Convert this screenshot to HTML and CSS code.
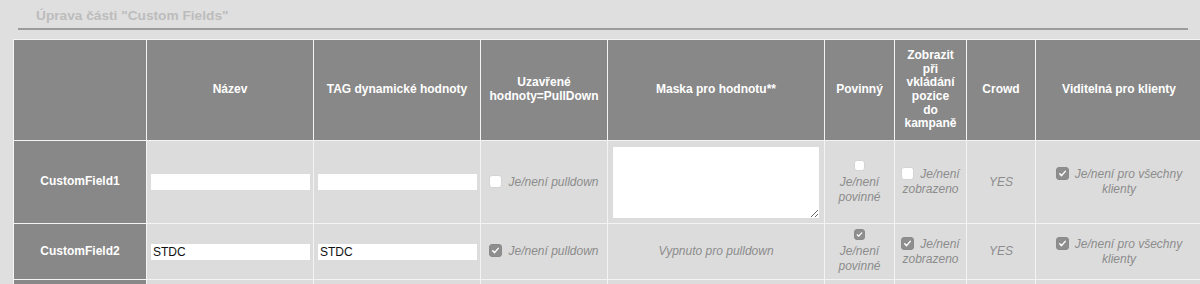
FILE: index.html
```html
<!DOCTYPE html>
<html lang="cs">
<head>
  <meta charset="UTF-8">
  <title>Úprava části Custom Fields</title>
  <link rel="stylesheet" href="styles.css">
</head>
<body>
  <div class="page">
    <h2 class="section-title">Úprava části "Custom Fields"</h2>

    <table class="fields">
      <tr class="head-row">
        <th class="c-name"></th>
        <th class="c-title">Název</th>
        <th class="c-tag">TAG dynamické hodnoty</th>
        <th class="c-pull">Uzavřené hodnoty=PullDown</th>
        <th class="c-mask">Maska pro hodnotu**</th>
        <th class="c-req">Povinný</th>
        <th class="c-show">Zobrazit<br>při<br>vkládání<br>pozice<br>do<br>kampaně</th>
        <th class="c-crowd">Crowd</th>
        <th class="c-vis">Viditelná pro klienty</th>
      </tr>

      <tr class="row-tall">
        <th>CustomField1</th>
        <td><input class="text-field" type="text" value=""></td>
        <td><input class="text-field" type="text" value=""></td>
        <td class="note"><span class="check"></span>Je/není pulldown</td>
        <td><textarea class="mask-field"></textarea></td>
        <td class="note"><span class="check stacked"></span><br>Je/není povinné</td>
        <td class="note"><span class="check"></span>Je/není zobrazeno</td>
        <td class="note">YES</td>
        <td class="note"><span class="check on"><svg viewBox="0 0 12 12"><path d="M3 6.3l2 2 4-4.6"/></svg></span>Je/není pro všechny klienty</td>
      </tr>

      <tr class="row-short">
        <th>CustomField2</th>
        <td><input class="text-field" type="text" value="STDC"></td>
        <td><input class="text-field" type="text" value="STDC"></td>
        <td class="note"><span class="check on"><svg viewBox="0 0 12 12"><path d="M3 6.3l2 2 4-4.6"/></svg></span>Je/není pulldown</td>
        <td class="note">Vypnuto pro pulldown</td>
        <td class="note"><span class="check on stacked"><svg viewBox="0 0 12 12"><path d="M3 6.3l2 2 4-4.6"/></svg></span><br>Je/není povinné</td>
        <td class="note"><span class="check on"><svg viewBox="0 0 12 12"><path d="M3 6.3l2 2 4-4.6"/></svg></span>Je/není zobrazeno</td>
        <td class="note">YES</td>
        <td class="note"><span class="check on"><svg viewBox="0 0 12 12"><path d="M3 6.3l2 2 4-4.6"/></svg></span>Je/není pro všechny klienty</td>
      </tr>

      <tr class="row-short">
        <th></th>
        <td></td>
        <td></td>
        <td></td>
        <td></td>
        <td></td>
        <td></td>
        <td></td>
        <td></td>
      </tr>
    </table>
  </div>
</body>
</html>
```

FILE: styles.css
```css
html {
  overflow: hidden;
}

body {
  margin: 0;
  background-color: #dfdfdf;
  font-family: "Liberation Sans", Arial, sans-serif;
  font-size: 12px;
}

.page {
  padding-top: 8px;
}

.section-title {
  margin: 0 12px 0 18px;
  padding: 0 0 4px 18px;
  font-size: 13.7px;
  line-height: 16px;
  font-weight: bold;
  color: #bcbcbc;
  border-bottom: 2px solid #9c9c9c;
}

.fields {
  margin: 9px 0 0 13px;
  width: 1190px;
  table-layout: fixed;
  border-collapse: separate;
  border-spacing: 1px;
  background-color: #f4f4f4;
}

.fields th,
.fields td {
  box-sizing: border-box;
  vertical-align: middle;
  text-align: center;
}

.fields th {
  background-color: #888888;
  color: #fff;
  font-weight: bold;
  line-height: 13.6px;
  padding: 0 5px;
}

.fields td {
  background-color: #dcdcdc;
  padding: 5px 4px;
  line-height: 15px;
}

.head-row th {
  height: 100px;
}

.row-tall th,
.row-tall td {
  height: 82px;
}

.row-short th,
.row-short td {
  height: 55px;
}

.c-name { width: 132px; }
.c-title { width: 166px; }
.c-tag { width: 166px; }
.c-pull { width: 126px; }
.c-mask { width: 216px; }
.c-req { width: 69px; }
.c-show { width: 71px; }
.c-crowd { width: 68px; }
.c-vis { width: 166px; }

.text-field {
  display: block;
  box-sizing: border-box;
  width: 159px;
  height: 16px;
  margin: 0;
  padding: 0 2px;
  border: none;
  background-color: #fff;
  font-family: "Liberation Sans", Arial, sans-serif;
  font-size: 12px;
  color: #111;
}

.mask-field {
  display: block;
  box-sizing: border-box;
  width: 206px;
  height: 71px;
  margin: 0 0 0 1px;
  padding: 2px;
  border: none;
  background-color: #fff;
}

.note {
  color: #8c8c8c;
  font-style: italic;
}

.check {
  display: inline-block;
  box-sizing: border-box;
  width: 13px;
  height: 13px;
  margin: 0 6px 0 0;
  vertical-align: -2px;
  border: 1px solid #d4d4d4;
  border-radius: 3px;
  background-color: #fff;
}

.check.stacked {
  width: 11px;
  height: 11px;
  margin: 0 0 2px;
}

.check.on {
  border-color: #8a8a8a;
  background-color: #8e8e8e;
}

.check svg {
  display: block;
  width: 100%;
  height: 100%;
  fill: none;
  stroke: #fff;
  stroke-width: 1.6;
  stroke-linecap: round;
  stroke-linejoin: round;
}
```
